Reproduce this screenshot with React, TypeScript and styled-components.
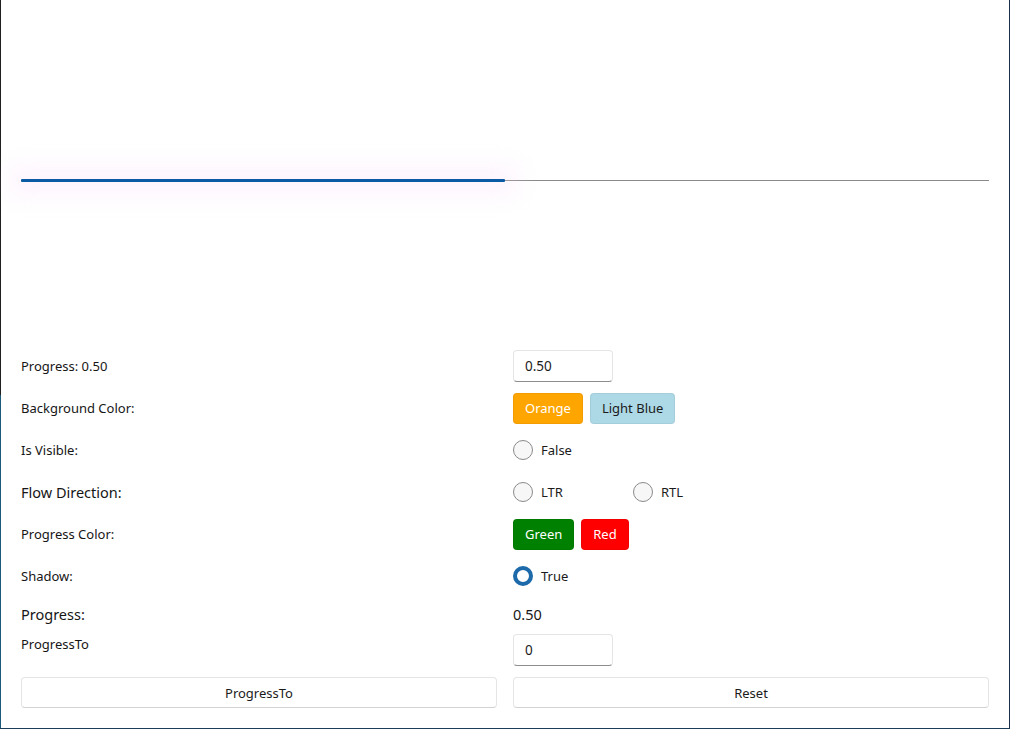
import React from "react";
import styled, { createGlobalStyle } from "styled-components";

const Global = createGlobalStyle`
  html, body { margin: 0; padding: 0; background: #ffffff; }
  body { font-family: "Noto Sans", "Open Sans", sans-serif; color: #1b1b1b; }
  * { box-sizing: border-box; }
`;

const Frame = styled.div`
  width: 1010px;
  height: 729px;
  padding-left: 1px;
  border-right: 1px solid #1c2f4c;
  border-bottom: 1px solid #1c3d5a;
  background:
    linear-gradient(#202020, #202020) left top / 1px 395px no-repeat,
    linear-gradient(#1b5a78, #1b5a78) left 395px / 1px 100% no-repeat,
    #ffffff;
  display: flex;
  flex-direction: column;
  overflow: hidden;
`;

const Content = styled.div`
  padding: 0 20px 0 20px;
  display: flex;
  flex-direction: column;
`;

const BarArea = styled.div`
  height: 345px;
  padding-top: 179px;
`;

const Track = styled.div`
  position: relative;
  height: 3px;
  &::before {
    content: "";
    position: absolute;
    left: 0;
    right: 0;
    top: 1px;
    height: 1px;
    background: #8a8a8a;
  }
`;

const Fill = styled.div`
  position: relative;
  height: 3px;
  background: #0a5ba3;
  border-radius: 1px;
  box-shadow: 0 0 24px 12px rgba(248, 215, 250, 0.3);
`;

const Grid = styled.div`
  display: grid;
  grid-template-columns: 1fr 1fr;
  column-gap: 16px;
`;

const Cell = styled.div<{ $h: number; $align?: string; $pt?: number }>`
  height: ${(p) => p.$h}px;
  padding-top: ${(p) => p.$pt || 0}px;
  display: flex;
  align-items: ${(p) => p.$align || "center"};
  gap: 7px;
`;

const Label = styled.span<{ $size?: number }>`
  font-size: ${(p) => p.$size || 13}px;
  line-height: 20px;
  color: #161616;
`;

const Entry = styled.div`
  width: 100px;
  height: 32px;
  border: 1px solid #e5e5e5;
  border-bottom-color: #8d8d8d;
  border-radius: 4px;
  padding-left: 11px;
  display: flex;
  align-items: center;
  font-size: 13.5px;
  color: #1b1b1b;
  background: #fff;
`;

const ColorButton = styled.div<{ $bg: string; $fg: string }>`
  height: 31px;
  padding: 0 11px;
  display: flex;
  align-items: center;
  border-radius: 4px;
  background: ${(p) => p.$bg};
  color: ${(p) => p.$fg};
  font-size: 13px;
  border: 1px solid rgba(0, 0, 0, 0.05);
`;

const RadioItem = styled.div`
  width: 120px;
  display: flex;
  align-items: center;
  gap: 8px;
  font-size: 13px;
  color: #1b1b1b;
`;

const RadioCircle = styled.span<{ $checked?: boolean }>`
  width: 20px;
  height: 20px;
  border-radius: 50%;
  box-sizing: border-box;
  border: ${(p) => (p.$checked ? "4.5px solid #1d6aaa" : "1px solid #8a8a8a")};
  background: ${(p) => (p.$checked ? "#ffffff" : "#f7f7f7")};
`;

const RadioGroup = styled.div`
  display: flex;
  align-items: center;
`;

const WideButton = styled.div`
  height: 31px;
  border: 1px solid #e5e5e5;
  border-bottom-color: #d2d2d2;
  border-radius: 4px;
  background: #fff;
  display: flex;
  align-items: center;
  justify-content: center;
  font-size: 13px;
  color: #1b1b1b;
`;

const ButtonRow = styled(Grid)`
  margin-top: 11px;
`;

const Radio = ({ label, checked }: { label: string; checked?: boolean }) => (
  <RadioItem>
    <RadioCircle $checked={checked} />
    <span>{label}</span>
  </RadioItem>
);

export default function App() {
  return (
    <>
      <Global />
      <Frame>
        <Content>
          <BarArea>
            <Track>
              <Fill style={{ width: `${0.5 * 100}%` }} />
            </Track>
          </BarArea>
          <Grid>
            <Cell $h={42}><Label>Progress: 0.50</Label></Cell>
            <Cell $h={42}><Entry>0.50</Entry></Cell>

            <Cell $h={42}><Label>Background Color:</Label></Cell>
            <Cell $h={42}>
              <ColorButton $bg="#ffa500" $fg="#ffffff">Orange</ColorButton>
              <ColorButton $bg="#add8e6" $fg="#1b1b1b">Light Blue</ColorButton>
            </Cell>

            <Cell $h={42}><Label>Is Visible:</Label></Cell>
            <Cell $h={42}><Radio label="False" /></Cell>

            <Cell $h={42}><Label $size={14.5}>Flow Direction:</Label></Cell>
            <Cell $h={42}>
              <RadioGroup>
                <Radio label="LTR" />
                <Radio label="RTL" />
              </RadioGroup>
            </Cell>

            <Cell $h={42}><Label>Progress Color:</Label></Cell>
            <Cell $h={42}>
              <ColorButton $bg="#008000" $fg="#ffffff">Green</ColorButton>
              <ColorButton $bg="#ff0000" $fg="#ffffff">Red</ColorButton>
            </Cell>

            <Cell $h={42}><Label>Shadow:</Label></Cell>
            <Cell $h={42}><Radio label="True" checked /></Cell>

            <Cell $h={37} $align="flex-start" $pt={7}><Label $size={14.5}>Progress:</Label></Cell>
            <Cell $h={37} $align="flex-start" $pt={7}><Label $size={14.5}>0.50</Label></Cell>

            <Cell $h={32} $align="flex-start"><Label>ProgressTo</Label></Cell>
            <Cell $h={32}><Entry>0</Entry></Cell>
          </Grid>
          <ButtonRow>
            <WideButton>ProgressTo</WideButton>
            <WideButton>Reset</WideButton>
          </ButtonRow>
        </Content>
      </Frame>
    </>
  );
}
